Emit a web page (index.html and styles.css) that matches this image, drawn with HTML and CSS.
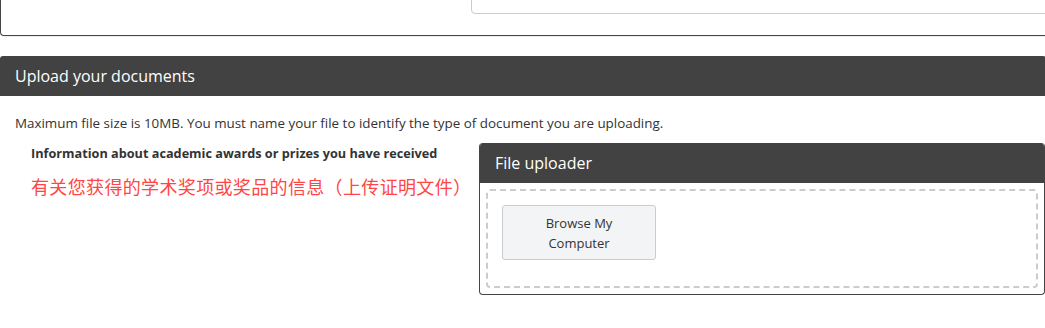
FILE: index.html
```html
<!DOCTYPE html>
<html lang="en">
<head>
<meta charset="utf-8">
<title>Upload your documents</title>
<link rel="stylesheet" href="styles.css">
</head>
<body>
<div class="page">
  <div class="top-card">
    <textarea class="notes" aria-label="Notes"></textarea>
  </div>

  <section class="section">
    <h2 class="section-title">Upload your documents</h2>
    <div class="section-body">
      <p class="hint">Maximum file size is 10MB. You must name your file to identify the type of document you are uploading.</p>
      <div class="doc-row">
        <div class="doc-label">
          <div class="doc-name">Information about academic awards or prizes you have received</div>
          <div class="doc-note">有关您获得的学术奖项或奖品的信息（上传证明文件）</div>
        </div>
        <div class="uploader">
          <div class="uploader-head">File uploader</div>
          <div class="uploader-body">
            <div class="dropzone">
              <button class="browse" type="button">Browse My<br>Computer</button>
            </div>
          </div>
        </div>
      </div>
    </div>
  </section>
</div>
</body>
</html>
```

FILE: styles.css
```css
html, body {
  margin: 0;
  padding: 0;
  background: #fff;
  overflow: hidden;
}

body {
  font-family: "Open Sans", Lato, "Noto Sans CJK SC", sans-serif;
  color: #333;
}

.page {
  width: 1046px;
}

.top-card {
  margin-top: -50px;
  padding: 0 0 21px 470px;
  border-left: 1px solid #444;
  border-bottom: 1px solid #444;
  border-radius: 0 0 0 4px;
  box-shadow: 0 1px 1px rgba(0, 0, 0, 0.08);
}

.notes {
  display: block;
  box-sizing: border-box;
  width: 590px;
  height: 64px;
  margin: 0;
  border: 1px solid #ccc;
  border-radius: 4px;
  background: #fff;
  resize: vertical;
}

.section {
  margin-top: 20px;
}

.section-title {
  margin: 0;
  height: 40px;
  line-height: 40px;
  padding-left: 15px;
  background: #424242;
  color: #fff;
  font-size: 16px;
  font-weight: 500;
  border-radius: 3px 3px 0 0;
}

.section-body {
  padding: 17px 0 0 15px;
}

.hint {
  margin: 0 0 10px;
  font-size: 13.4px;
  line-height: 20px;
  color: #333;
}

.doc-row {
  display: flex;
  align-items: flex-start;
}

.doc-label {
  width: 464px;
  padding-left: 16px;
  box-sizing: border-box;
}

.doc-name {
  font-size: 12.7px;
  font-weight: 700;
  line-height: 20px;
  color: #333;
}

.doc-note {
  margin-top: 10px;
  font-family: "Noto Sans CJK SC", sans-serif;
  font-size: 18px;
  line-height: 26px;
  letter-spacing: 0.35px;
  color: #ff4545;
}

.uploader {
  width: 566px;
  box-sizing: border-box;
  border: 1px solid #444;
  border-top: 0;
  border-radius: 4px;
  overflow: hidden;
}

.uploader-head {
  height: 40px;
  line-height: 40px;
  padding-left: 15px;
  background: #424242;
  color: #fff;
  font-size: 16px;
  font-weight: 500;
}

.uploader-body {
  padding: 6px;
}

.dropzone {
  border: 2px dashed #ccc;
  border-radius: 4px;
  padding: 14px 14px 26px;
}

.browse {
  display: block;
  width: 154px;
  height: 55px;
  padding: 0;
  background: #f3f4f6;
  border: 1px solid #ccc;
  border-radius: 3px;
  font-family: "Open Sans", Lato, sans-serif;
  font-size: 13px;
  line-height: 20px;
  color: #333;
}
```
